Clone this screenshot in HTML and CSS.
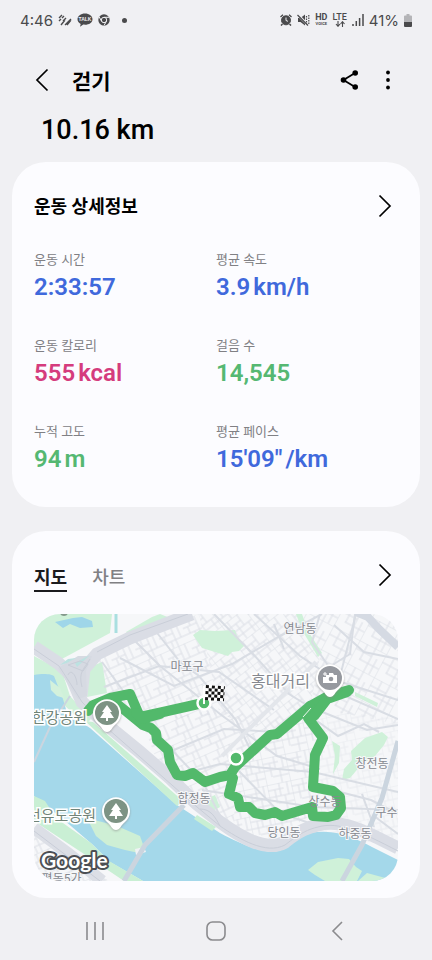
FILE: index.html
```
<!DOCTYPE html>
<html lang="ko">
<head>
  <meta charset="UTF-8" />
  <meta name="viewport" content="width=device-width, initial-scale=1.0" />
  <title>걷기</title>
  <link rel="stylesheet" href="styles.css">
</head>
<body>
  <div class="status-bar">
    <div class="status-left">
      <span class="clock">4:46</span>
      <svg width="14" height="12" viewBox="0 0 14 12" fill="none" stroke="#4a4a4c" stroke-width="1.4">
        <path d="M1 4l3-3M1 7l2-2M4 4l2-2M3 11l4-5M7 11l6-6M9 11l4-5M5 7l3-3" />
      </svg>
      <svg width="16" height="14" viewBox="0 0 16 14">
        <path d="M8 0.500C3.800.500.500 3 .500 6.200c0 2 1.300 3.700 3.200 4.700L3 13.700l3.300-2.100c4.900.700 9.200-1.700 9.200-5.400C15.500 3 12.200.500 8 .500z" fill="#4a4a4c" />
        <text class="talk" x="8" y="8">TALK</text>
      </svg>
      <svg width="12" height="12" viewBox="0 0 12 12" fill="none">
        <circle cx="6" cy="6" r="5.700" fill="#4a4a4c" />
        <circle cx="6" cy="6" r="2.700" stroke="#f0f0f3" stroke-width="1" />
        <path d="M6 3.300h5M3.600 7.300L1.200 3M8.400 7.300L6 11.500" stroke="#f0f0f3" />
      </svg>
      <span class="more-dot"></span>
    </div>
    <div class="status-right">
      <svg width="12" height="12" viewBox="0 0 12 12" fill="none" stroke="#4a4a4c">
        <circle cx="6" cy="6.300" r="4.500" fill="#4a4a4c" />
        <path d="M.500 3L3 .700M11.500 3L9 .700M2.500 10L1 11.600M9.500 10l1.500 1.600" stroke-width="1.400" />
        <path d="M6 3.500v3l2 .800" stroke="#f0f0f3" />
      </svg>
      <svg width="13" height="12" viewBox="0 0 13 12" fill="none" stroke="#4a4a4c">
        <path d="M1 4h2.500L8 .500v11L3.500 8H1z" fill="#4a4a4c" stroke="none" />
        <path d="M.500.500l11 11" stroke="#f0f0f3" stroke-width="2.500" />
        <path d="M.500 1l10.500 10.500" stroke-width="1.200" />
        <path d="M9.500 2v8M11.800 1v10" stroke-dasharray="1.500 1" stroke-width="1.200" />
      </svg>
      <span class="hd">HD<small>VOICE</small></span>
      <span class="lte">LTE
        <svg width="10" height="6" viewBox="0 0 10 6" fill="none" stroke="#4a4a4c" stroke-width="1.100">
          <path d="M3 0v5M1 3l2 2.300L5 3M7.500 6V1M5.500 3l2-2.300 2 2.300" />
        </svg>
      </span>
      <svg width="12" height="12" viewBox="0 0 12 12" stroke="#4a4a4c" stroke-width="1.500">
        <path d="M1 10v2M4.300 7v5M7.600 4v8M11 0v12" />
      </svg>
      <span class="battery-text">41%</span>
      <svg width="8" height="13" viewBox="0 0 8 13">
        <path d="M2.500 0h3v1.500H7a1 1 0 0 1 1 1V8H0V2.500a1 1 0 0 1 1-1h1.500z" fill="#b4b4b7" />
        <path d="M0 8h8v4a1 1 0 0 1-1 1H1a1 1 0 0 1-1-1z" fill="#4a4a4c" />
      </svg>
    </div>
  </div>

  <header class="header">
    <button class="icon-button" aria-label="뒤로">
      <svg width="14" height="24" viewBox="0 0 14 24" fill="none" stroke="#000" stroke-width="1.700">
        <path d="M12.500 1.500L2 12l10.500 10.500" />
      </svg>
    </button>
    <h1>걷기</h1>
    <button class="icon-button" aria-label="공유">
      <svg width="20" height="20" viewBox="0 0 20 20">
        <path d="M15 3L3.500 10 15 17" fill="none" stroke="#000" stroke-width="1.800" />
        <circle cx="15.200" cy="3" r="2.800" />
        <circle cx="3.500" cy="10" r="2.800" />
        <circle cx="15.200" cy="17" r="2.800" />
      </svg>
    </button>
    <button class="icon-button" aria-label="더보기">
      <svg width="6" height="20" viewBox="0 0 6 20">
        <circle cx="3" cy="2.500" r="1.900" />
        <circle cx="3" cy="10" r="1.900" />
        <circle cx="3" cy="17.500" r="1.900" />
      </svg>
    </button>
  </header>

  <main>
    <p class="distance">10.16 km</p>

    <section class="card">
      <div class="card-head">
        <h2>운동 상세정보</h2>
        <button class="icon-button" aria-label="상세정보 보기">
          <svg width="14" height="24" viewBox="0 0 14 24" fill="none" stroke="#000" stroke-width="1.700">
            <path d="M1.500 1.500L12 12 1.500 22.500" />
          </svg>
        </button>
      </div>
      <dl class="stats">
        <div><dt>운동 시간</dt><dd class="blue">2:33:57</dd></div>
        <div><dt>평균 속도</dt><dd class="blue">3.9<span class="unit">km/h</span></dd></div>
        <div><dt>운동 칼로리</dt><dd class="pink">555<span class="unit">kcal</span></dd></div>
        <div><dt>걸음 수</dt><dd class="green">14,545</dd></div>
        <div><dt>누적 고도</dt><dd class="green">94<span class="unit">m</span></dd></div>
        <div><dt>평균 페이스</dt><dd class="blue">15'09"<span class="unit">/km</span></dd></div>
      </dl>
    </section>

    <section class="card map-card">
      <div class="card-head">
        <div class="tabs">
          <button class="tab active">지도</button>
          <button class="tab">차트</button>
        </div>
        <button class="icon-button" aria-label="지도 보기">
          <svg width="14" height="24" viewBox="0 0 14 24" fill="none" stroke="#000" stroke-width="1.700">
            <path d="M1.500 1.500L12 12 1.500 22.500" />
          </svg>
        </button>
      </div>

      <svg class="map" viewBox="0 0 364 267">
        <defs>
          <pattern id="blocks-a" width="26" height="22" patternUnits="userSpaceOnUse" patternTransform="rotate(-24)">
            <path d="M0 0H26M0 8H15M0 15H26M8 0V8M15 0V22M21 0V15M5 8V15M10 15V22" />
          </pattern>
          <pattern id="blocks-b" width="28" height="25" patternUnits="userSpaceOnUse" patternTransform="rotate(-38)">
            <path d="M0 0H28M0 7H19M7 13H28M0 19H28M0 0V25M7 0V19M13 7V25M19 0V13M24 13V25" />
          </pattern>
          <pattern id="blocks-c" width="24" height="27" patternUnits="userSpaceOnUse" patternTransform="rotate(-12)">
            <path d="M0 0H24M0 6H16M0 13H24M8 20H24M0 0V27M7 6V20M12 0V13M16 13V27M20 0V13" />
          </pattern>
          <pattern id="blocks-d" width="30" height="26" patternUnits="userSpaceOnUse" patternTransform="rotate(28)">
            <path d="M0 0H30M0 9H18M8 17H30M0 0V26M9 0V17M18 0V26M24 9V26" />
          </pattern>
        </defs>

        <rect width="364" height="267" fill="#f6f7f9" />

        <!-- side streets, one pattern per district -->
        <path d="M63 40L165 0 186 100 108 108 70 80z" fill="url(#blocks-a)" />
        <path d="M165 0H264L286 43 276 93 243 121 186 100z" fill="url(#blocks-b)" />
        <path d="M108 108L186 95 243 118 201 150 200 225 130 165z" fill="url(#blocks-a)" />
        <path d="M243 118L276 93 281 141 279 200 230 230 200 225 201 150z" fill="url(#blocks-c)" />
        <path d="M264 0H364V110L276 93 286 43z" fill="url(#blocks-d)" />
        <path d="M276 93L364 105V235L280 215z" fill="url(#blocks-c)" opacity="0.500" />
        <path d="M0 215L75 267H0z" fill="url(#blocks-a)" />

        <!-- parks -->
        <g fill="#cff1d9">
          <path d="M0 0H78L76 19 39 39 26 46 0 33z" />
          <path d="M0 42L28 57 36 82 57 105 51 111 0 62z" />
          <path d="M56 53L68 48 73 79 53 83z" />
          <path d="M159 21L166 16 181 17 201 16 204 25 211 31 205 37 198 38 194 42 181 38 168 34z" />
          <path d="M92 18L118 3 126 0 136 4 96 23z" />
          <path d="M308 166L310 155 318 146 317 137 331 124 348 118 354 123 350 131 341 142 327 151 316 164z" />
          <path d="M298 127L306 132 305 149 299 160 301 142z" />
          <path d="M168 187L181 181 186 193 179 197z" />
          <path d="M321 78L344 89 343 93 321 82z" />
        </g>
        <path d="M262 0L268 16 284 43 288 39 274 17 268 0z" fill="#cff1d9" />
        <path d="M21 8L29 14 36 10 46 14 59 13 58 7 48 3 39 4z" fill="#9fd6e9" />
        <path d="M82 0V19" stroke="#a9dfe0" stroke-width="3" />
        <circle cx="30" cy="-2" r="4" fill="#84998c" />

        <!-- wide streets -->
        <g class="streets">
          <path d="M96 22L126 52 186 100 243 142 286 155" />
          <path d="M120 15L146 48 165 62 202 106 219 141" />
          <path d="M68 48L90 78 121 118 170 170 194 218" />
          <path d="M86 44L140 72 198 50 246 22 288 0" />
          <path d="M70 73L125 52 185 58 240 96" />
          <path d="M180 0L219 40 255 80 276 93" />
          <path d="M220 0L266 42 304 67 364 86" />
          <path d="M135 138L190 115 243 118 302 78 322 0" />
          <path d="M140 162L186 150 279 158 364 178" />
          <path d="M201 153L246 199 287 213" />
          <path d="M286 0L278 28 295 53 316 40 321 0" />
          <path d="M276 93L333 116 364 111" />
          <path d="M283 107L304 122 330 110 345 118" />
          <path d="M302 78L364 105" />
          <path d="M279 171L337 186 364 200" />
          <path d="M340 202L364 220M328 180L340 213" />
          <path d="M168 176L234 186 279 193 364 196" />
          <path d="M240 10L250 35M300 11L330 38 364 45" />
        </g>
        <path d="M282 48L188 142" stroke="#e3e6eb" stroke-width="4" />

        <!-- river -->
        <path d="M0 61C9 59 18 60 20 62L29 85 33 99 56 114 143 191 163 204 186 219C211 232 237 244 251 234C264 224 270 218 284 218C306 216 325 226 338 233L364 246V267H109L76 248 59 231 30 206 0 182z" fill="#a4d8ea" />
        <path d="M51 107L59 108 149 187 143 192z" fill="#c9efd4" />
        <path d="M16 66L26 74 30 84 23 82 17 76z" fill="#d3f1dc" />
        <path d="M163 201L182 213 178 217 160 205z" fill="#c9efd4" />
        <path d="M0 182L11 187 22 204 57 229 75 247 109 267H90L47 238 0 207z" fill="#c9efd4" />
        <path d="M53 204L83 212 106 222 111 236 105 239 91 236 73 231 62 222z" fill="#ceefd5" />
        <path d="M101 235L110 233 112 238 102 241z" fill="#f0f2f5" />
        <path d="M274 256L284 248 304 244 315 245 322 253 328 257 323 267H291L281 261z" fill="#cff1d9" />
        <path d="M324 267L333 259 355 265 350 267z" fill="#cff1d9" />

        <!-- expressways and bridges -->
        <g class="road-wide">
          <path d="M0 33L24 49 36 60 48 88 73 111 106 138 136 164 163 190 186 208C205 222 232 239 251 228C266 216 275 213 284 211C305 205 327 216 342 223L364 234" />
          <path d="M158 0L129 11 96 24 63 40 50 55 47 82" />
        </g>
        <path d="M0 214L35 240 68 267" stroke="#dcdfe6" stroke-width="12" fill="none" />
        <path d="M24 54L44 42 58 42 52 57 53 82 44 85 32 67z" fill="#d6dae2" />
        <path d="M26 51L34 45 42 44 33 49zM41 49L56 41 43 53z" fill="#bce2e1" />
        <g class="lane">
          <path d="M34 51L46 47 54 50 49 57 39 53zM34 61C37 54 43 62 43 71M48 73C44 58 50 55 56 45" />
          <path d="M0 35L25 52 36 69 48 88 73 114 163 193 186 212C205 225 232 241 251 231C266 219 275 215 284 213C305 207 327 218 364 237" />
          <path d="M154 0L96 21 63 38M0 217L66 267" />
        </g>
        <g class="bridge">
          <path d="M150 191L111 231 90 267M364 127L348 184 328 231 308 267" />
          <path class="bridge-thin" d="M36 82L16 113 0 148" />
        </g>
        <path d="M322-2L334 3 345 15 364 33" fill="none" stroke="#d5dae3" stroke-width="8" />
        <path d="M153 183C158 172 165 181 155 189M166 195C177 195 181 203 186 212" class="lane" />

        <g class="place">
          <text x="266" y="19">연남동</text>
          <text x="153" y="57">마포구</text>
          <text x="160" y="189">합정동</text>
          <text x="338" y="154">창전동</text>
          <text x="250" y="223">당인동</text>
          <text x="321" y="224">하중동</text>
          <text x="358" y="203">구수동</text>
          <text x="22" y="269">양평동5가</text>
        </g>

        <!-- walked route -->
        <g class="route">
          <path d="M169 89L129 98 106 103 96 80 76 84 59 91 54 97M76 84L88 94 109 111 117 114 122 119 123 126 134 136 136 148 143 161 151 162 159 159 171 168 186 163 196 161 201 153 236 121 243 120 276 92 294 82 315 76" />
          <path d="M276 92L274 104 289 124 281 141 279 173 299 177 306 183 307 194 302 201 294 203 279 202 278 193 248 202 241 198 231 201 221 199 215 193 206 193 204 184 195 180 199 164" />
          <path d="M294 84L281 101 276 105M102 99L108 105 126 100M296 84L313 78" />
        </g>
        <path d="M269 103L277 94" stroke="#effaf2" stroke-width="1" />

        <g class="place over-route">
          <text x="291" y="192">상수동</text>
        </g>
        <g class="poi">
          <text x="53" y="109" text-anchor="end">한강공원</text>
          <text x="62" y="207" text-anchor="end">선유도공원</text>
          <text class="street-name" x="276" y="73" text-anchor="end">홍대거리</text>
        </g>

        <g class="pin" transform="translate(73 99)">
          <path d="M0 19C-4 19-5 14-9 11A14 14 0 1 1 9 11C5 14 4 19 0 19z" fill="#fff" />
          <circle r="12" fill="#7d9384" />
          <path d="M0-8L5-1H3L7 5H1V8H-1V5H-7L-3-1H-5z" fill="#fff" />
        </g>
        <g class="pin" transform="translate(82 197)">
          <path d="M0 19C-4 19-5 14-9 11A14 14 0 1 1 9 11C5 14 4 19 0 19z" fill="#fff" />
          <circle r="12" fill="#7d9384" />
          <path d="M0-8L5-1H3L7 5H1V8H-1V5H-7L-3-1H-5z" fill="#fff" />
        </g>
        <g class="pin" transform="translate(296 64)">
          <path d="M0 19C-4 19-5 14-9 11A14 14 0 1 1 9 11C5 14 4 19 0 19z" fill="#fff" />
          <circle r="12" fill="#96999f" />
          <path d="M-1-5H3L4-3H7V5H-7V-1H-4V-3H-1z" fill="#fff" />
          <circle cx="1" cy="1" r="2.300" fill="#96999f" />
          <path d="M-5-6V-2M-7-4H-3" stroke="#fff" />
        </g>

        <circle cx="202" cy="144" r="6.500" fill="#52b96b" stroke="#fff" stroke-width="2.500" />
        <circle cx="170" cy="89" r="6.500" fill="#52b96b" stroke="#fff" stroke-width="2.500" />
        <path d="M170 72V90" stroke="#fff" stroke-width="2" />
        <g transform="translate(172 71) rotate(4)">
          <rect width="19" height="15" fill="#fff" />
          <path class="checks" d="M0 1.500H19M0 7.500H19M0 13.500H19" />
          <path class="checks" d="M3 4.500H19M3 10.500H19" />
        </g>

        <text class="google" x="7" y="254">Google</text>
      </svg>
    </section>
  </main>

  <nav class="nav-bar">
    <button class="icon-button" aria-label="최근 앱">
      <svg width="18" height="18" viewBox="0 0 18 18" stroke="#8b8b8e" stroke-width="1.600">
        <path d="M1 0V18M9 0V18M17 0V18" />
      </svg>
    </button>
    <button class="icon-button" aria-label="홈">
      <svg width="20" height="20" viewBox="0 0 20 20" fill="none" stroke="#8b8b8e" stroke-width="1.600">
        <rect x="1" y="1" width="18" height="18" rx="5.500" />
      </svg>
    </button>
    <button class="icon-button" aria-label="뒤로">
      <svg width="12" height="20" viewBox="0 0 12 20" fill="none" stroke="#8b8b8e" stroke-width="1.600">
        <path d="M11 1L2 10l9 9" />
      </svg>
    </button>
  </nav>
</body>
</html>
```
FILE: styles.css
```
* {
  box-sizing: border-box;
}
body {
  margin: 0;
  min-height: 100vh;
  display: flex;
  flex-direction: column;
  font-family: Roboto, "Noto Sans CJK KR", sans-serif;
  background: #f0f0f3;
  color: #000;
}
svg {
  display: block;
}
button {
  padding: 0;
  border: 0;
  background: none;
  font-family: inherit;
  cursor: pointer;
}
h1, h2, p, dl, dd {
  margin: 0;
}
.icon-button {
  display: flex;
  align-items: center;
  justify-content: center;
}
.status-bar {
  display: flex;
  justify-content: space-between;
  height: 40px;
  padding: 0 20px;
  color: #4a4a4c;
}
.status-left,
.status-right {
  display: flex;
  align-items: center;
}
.status-left {
  gap: 5px;
}
.status-right {
  gap: 5px;
}
.clock,
.battery-text {
  font-family: Inter, sans-serif;
  font-size: 15px;
}
.talk {
  font: bold 5px "Liberation Sans", sans-serif;
  fill: #f0f0f3;
  text-anchor: middle;
}
.more-dot {
  width: 5px;
  height: 5px;
  margin-left: 7px;
  border-radius: 50%;
  background: #4a4a4c;
}
.hd,
.lte {
  display: flex;
  flex-direction: column;
  align-items: center;
  font-size: 9px;
  line-height: 8px;
  font-weight: 700;
}
.hd small {
  font-size: 4px;
  line-height: 6px;
}
.lte {
  font-weight: 500;
}
.header {
  display: flex;
  align-items: center;
  height: 80px;
  padding: 0 41px 0 35px;
}
.header h1 {
  flex: 1;
  margin-left: 23px;
  padding-top: 3px;
  font-size: 21px;
  line-height: 32px;
}
.header .icon-button + .icon-button {
  margin-left: 25px;
}
main {
  flex: 1;
  padding: 0 12px;
}
.distance {
  margin-top: -7px;
  padding-left: 29px;
  font-size: 27px;
  line-height: 34px;
  font-weight: 500;
}
.card {
  margin-top: 15px;
  padding: 28px 22px 34px;
  border-radius: 34px;
  background: #fcfcff;
}
.card-head {
  display: flex;
  align-items: center;
  justify-content: space-between;
  height: 32px;
  padding-right: 6px;
}
.card-head h2 {
  padding-top: 2px;
  font-size: 18px;
  line-height: 32px;
}
.stats {
  display: grid;
  grid-template-columns: 1fr 1fr;
  row-gap: 35px;
  margin-top: 28px;
}
.stats dt {
  font-size: 13px;
  line-height: 20px;
  color: #808084;
}
.stats dd {
  margin-top: 3px;
  font-size: 24px;
  line-height: 28px;
  font-weight: 600;
}
.unit {
  margin-left: 3px;
}
.blue {
  color: #4069dc;
}
.pink {
  color: #d53c7d;
}
.green {
  color: #55b872;
}
.map-card {
  margin-top: 24px;
  padding-bottom: 17px;
}
.tabs {
  display: flex;
  gap: 25px;
}
.tab {
  padding-top: 8px;
  font-size: 18px;
  line-height: 24px;
  font-weight: 500;
  color: #808084;
  border-bottom: 2px solid transparent;
}
.tab.active {
  font-weight: 700;
  color: #1b1b1e;
  border-color: #1b1b1e;
}
.map {
  width: 100%;
  height: auto;
  margin-top: 23px;
  border-radius: 26px;
  overflow: hidden;
}
.map pattern path {
  fill: none;
  stroke: #dcdfe6;
  stroke-width: 1;
}
.streets {
  fill: none;
  stroke: #d9dde4;
  stroke-width: 2;
}
.road-wide {
  fill: none;
  stroke: #dadde5;
  stroke-width: 13;
}
.lane {
  fill: none;
  stroke: #c9ced8;
  stroke-width: 1;
}
.bridge {
  fill: none;
  stroke: #cbd5df;
  stroke-width: 5;
}
.bridge-thin {
  stroke-width: 2;
}
.route {
  fill: none;
  stroke: #52b96b;
  stroke-width: 10;
  stroke-linecap: round;
  stroke-linejoin: round;
}
.place {
  font-size: 12px;
  fill: #85888f;
  stroke: #f6f7f9;
  stroke-width: 2;
  paint-order: stroke;
  text-anchor: middle;
}
.over-route {
  stroke: none;
}
.poi {
  font-size: 15px;
  fill: #718478;
  stroke: #fff;
  stroke-width: 3;
  paint-order: stroke;
}
.street-name {
  font-size: 16px;
  fill: #85888f;
}
.pin {
  filter: drop-shadow(0 1px 1px #8889);
}
.checks {
  stroke: #111;
  stroke-width: 3;
  stroke-dasharray: 3 3;
}
.google {
  font: 700 21px Lato, sans-serif;
  fill: #fff;
  stroke: #4c4f54;
  stroke-width: 4;
  stroke-linejoin: round;
  paint-order: stroke;
}
.nav-bar {
  display: grid;
  grid-template-columns: repeat(3, 1fr);
  height: 62px;
  padding: 5px 34px 0;
}
.nav-bar .icon-button {
  height: 56px;
}
```
